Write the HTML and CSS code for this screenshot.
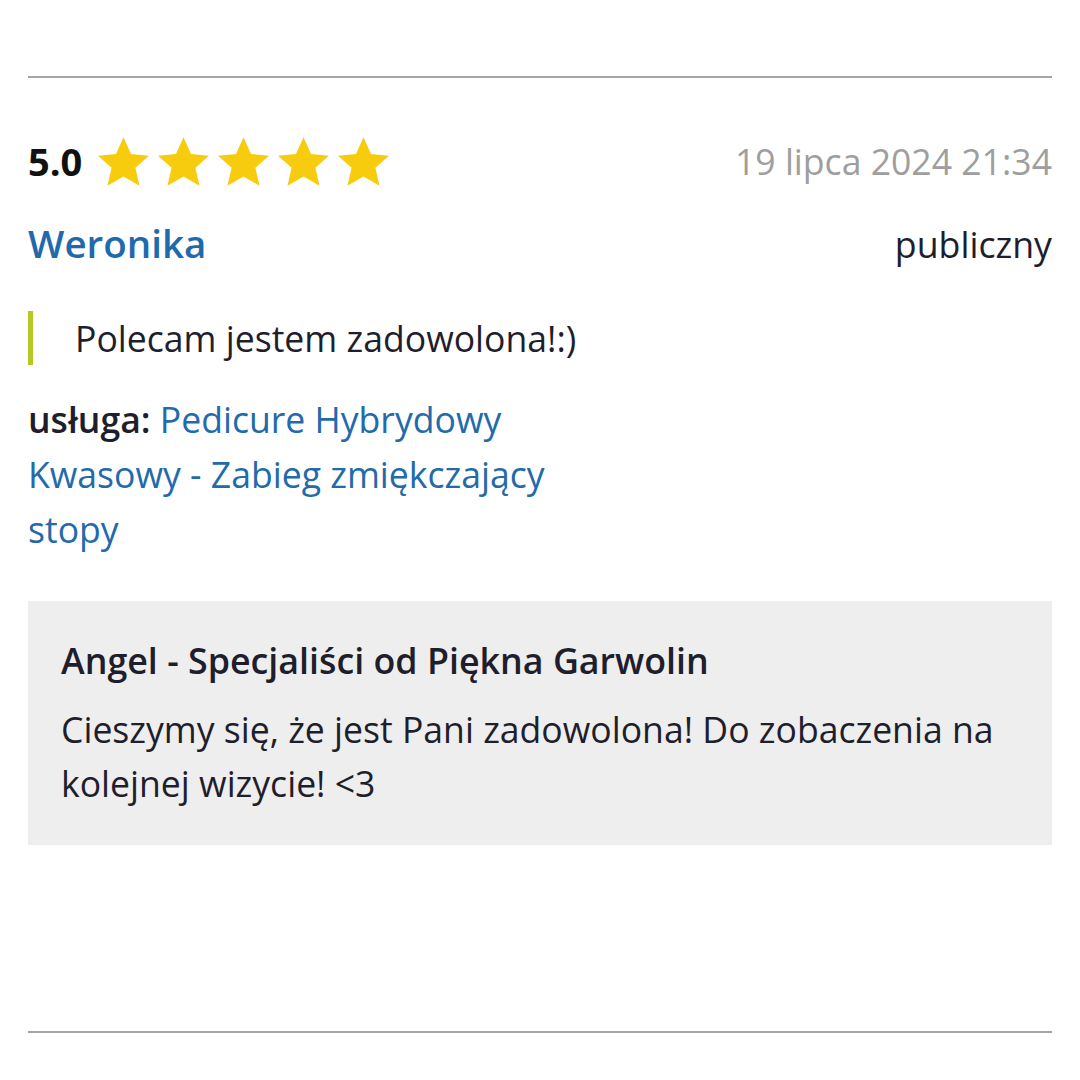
FILE: index.html
```html
<!DOCTYPE html>
<html>
<head>
    <meta charset="utf-8">
    <meta name="viewport" content="width=device-width, initial-scale=1.0">
    <link rel="stylesheet" href="styles.css">
</head>
<body>
<div class="page">
    <div class="sep sepTop"></div>
    <article class="review">
        <div class="reviewHead">
            <div class="rating">
                <span class="score">5.0</span>
                <span class="stars">
                    <svg class="star" viewBox="1.5 1.6 21 20"><path d="M12 1.6l3.1 6.9 7.4.7-5.6 5 1.7 7.4L12 17.8l-6.6 3.8 1.7-7.4-5.6-5 7.4-.7z"/></svg>
                    <svg class="star" viewBox="1.5 1.6 21 20"><path d="M12 1.6l3.1 6.9 7.4.7-5.6 5 1.7 7.4L12 17.8l-6.6 3.8 1.7-7.4-5.6-5 7.4-.7z"/></svg>
                    <svg class="star" viewBox="1.5 1.6 21 20"><path d="M12 1.6l3.1 6.9 7.4.7-5.6 5 1.7 7.4L12 17.8l-6.6 3.8 1.7-7.4-5.6-5 7.4-.7z"/></svg>
                    <svg class="star" viewBox="1.5 1.6 21 20"><path d="M12 1.6l3.1 6.9 7.4.7-5.6 5 1.7 7.4L12 17.8l-6.6 3.8 1.7-7.4-5.6-5 7.4-.7z"/></svg>
                    <svg class="star" viewBox="1.5 1.6 21 20"><path d="M12 1.6l3.1 6.9 7.4.7-5.6 5 1.7 7.4L12 17.8l-6.6 3.8 1.7-7.4-5.6-5 7.4-.7z"/></svg>
                </span>
            </div>
            <span class="date">19 lipca 2024 21:34</span>
        </div>
        <div class="reviewAuthor">
            <a class="author" href="#">Weronika</a>
            <span class="visibility">publiczny</span>
        </div>
        <blockquote class="reviewText">Polecam jestem zadowolona!:)</blockquote>
        <p class="service"><b>usługa:</b> <a href="#">Pedicure Hybrydowy Kwasowy - Zabieg zmiękczający stopy</a></p>
        <div class="reply">
            <div class="replyTitle">Angel - Specjaliści od Piękna Garwolin</div>
            <p class="replyText">Cieszymy się, że jest Pani zadowolona! Do zobaczenia na kolejnej wizycie! &lt;3</p>
        </div>
    </article>
    <div class="sep sepBottom"></div>
</div>
</body>
</html>
```

FILE: styles.css
```css
body{
    margin: 0;
    padding: 0;
    background: #fff;
    font-family: "Open Sans", "Noto Sans", sans-serif;
    color: #1e1e2c;
}
.page{
    padding: 0 28px;
}
.sep{
    height: 2px;
    background-color: #a6a6a6;
}
.sepTop{
    margin-top: 76px;
}
.sepBottom{
    margin-top: 186px;
}
.review{
    padding-top: 55px;
}
.reviewHead{
    display: flex;
    justify-content: space-between;
    align-items: center;
    height: 56px;
}
.rating{
    display: flex;
    align-items: center;
}
.score{
    font-size: 38px;
    font-weight: 700;
    color: #111;
    margin-right: 16px;
}
.stars{
    display: flex;
    gap: 9px;
}
.star{
    width: 51px;
    height: 49px;
    fill: #f8cc0e;
}
.date{
    font-size: 35.6px;
    color: #9e9e9e;
}
.reviewAuthor{
    display: flex;
    justify-content: space-between;
    align-items: baseline;
    margin-top: 28px;
}
.author{
    font-size: 38.5px;
    font-weight: 600;
    color: #1f69ac;
    text-decoration: none;
}
.visibility{
    font-size: 35.7px;
}
.reviewText{
    margin: 42px 0 0 0;
    padding-left: 42px;
    border-left: 5px solid #b6c823;
    font-size: 35.6px;
    line-height: 54px;
}
.service{
    margin: 27px 0 0 0;
    max-width: 560px;
    font-size: 35.6px;
    line-height: 55px;
}
.service b{
    font-weight: 600;
}
.service a{
    color: #236aab;
    text-decoration: none;
}
.reply{
    margin-top: 44px;
    background-color: #eeeeee;
    padding: 35px 33px 35px 33px;
}
.replyTitle{
    font-size: 35.8px;
    font-weight: 600;
}
.replyText{
    margin: 18px 0 0 0;
    font-size: 35.6px;
    line-height: 54px;
}
```
